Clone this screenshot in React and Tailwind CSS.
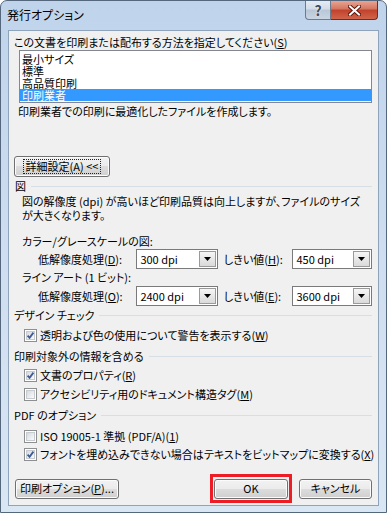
import React from "react";

const jp = "font-['Noto_Sans_CJK_JP','Noto_Sans',sans-serif] [font-feature-settings:'palt']";

function Btn({ children, className = "" }) {
    return (
        <div
            className={`flex items-center justify-center rounded-[3px] border border-[#707070] bg-[linear-gradient(#f2f2f2,#ebebeb_50%,#dddddd_50%,#cfcfcf)] shadow-[inset_0_0_0_1px_#fbfbfb] ${className}`}
        >
            {children}
        </div>
    );
}

function Section({ title, className = "" }) {
    return (
        <div className={`flex h-[13px] items-center leading-[13px] ${className}`}>
            <span>{title}</span>
            <div className="ml-[5px] h-px flex-1 bg-[#d5dfe5]" />
        </div>
    );
}

function Check({ checked }) {
    return (
        <div className="relative h-[13px] w-[13px] shrink-0 border border-[#8e8f8f] bg-white p-px">
            <div className="h-full w-full border border-[#c6cbd1] bg-gradient-to-br from-[#d6d9de] to-[#fbfbfb]" />
            {checked && (
                <svg className="absolute left-0 top-0" width="11" height="11" viewBox="0 0 11 11">
                    <path d="M2.6 5.6 L4.6 7.8 L8.4 2.6" fill="none" stroke="#3f5a94" strokeWidth="1.8" />
                </svg>
            )}
        </div>
    );
}

function CheckRow({ checked, children, className = "" }) {
    return (
        <div className={`ml-[10px] flex h-[14px] items-center leading-[14px] ${className}`}>
            <Check checked={checked} />
            <span className="ml-[3px]">{children}</span>
        </div>
    );
}

function Combo({ value, className = "" }) {
    return (
        <div className={`flex h-[20px] border border-[#7a7a7a] bg-white ${className}`}>
            <div className="flex-1 pl-[3px] leading-[18px]">{value}</div>
            <div className="m-px flex w-[17px] items-center justify-center border border-[#9a9a9a] bg-gradient-to-b from-[#f6f6f6] to-[#dadada]">
                <svg width="7" height="4" viewBox="0 0 7 4">
                    <path d="M0 0 H7 L3.5 4 Z" fill="#000" />
                </svg>
            </div>
        </div>
    );
}

function ComboRow({ label, left, right, rightLabel }) {
    return (
        <div className="ml-[24px] flex h-[20px] items-center">
            <span className="w-[99px]">{label}</span>
            <Combo value={left} className="w-[82px]" />
            <span className="ml-[6px] w-[69px]">{rightLabel}</span>
            <Combo value={right} className="w-[80px]" />
        </div>
    );
}

export default function App() {
    const items = ["最小サイズ", "標準", "高品質印刷", "印刷業者"];

    return (
        <div
            className={`flex h-[513px] w-[387px] flex-col overflow-hidden whitespace-nowrap rounded-t-[7px] border border-[#55677d] bg-gradient-to-b from-[#bfd4eb] via-[#cfdef0] to-[#d9e6f3] text-[11px] text-black ${jp}`}
        >
            {/* title bar */}
            <div className="flex h-[29px] shrink-0">
                <div className="pl-[6px] pt-[6px] text-[12px] leading-[16px]">発行オプション</div>
                <div className="ml-auto mr-[8px] flex h-[19px]">
                    <div className="flex w-[26px] items-center justify-center rounded-bl-[4px] border border-t-0 border-[#6d7b8c] bg-[linear-gradient(#e4ebf3,#d2dce8_45%,#b8c6d6_50%,#c9d5e2)] text-[14px] font-bold leading-none text-[#3c4b5c] [text-shadow:0_0_2px_#fff]">
                        ?
                    </div>
                    <div className="flex w-[47px] items-center justify-center rounded-br-[4px] border border-l-0 border-t-0 border-[#6e2c22] bg-[linear-gradient(#e8a491,#d4755f_45%,#c2412c_50%,#d0654b)]">
                        <svg width="13" height="11" viewBox="0 0 13 11">
                            <path d="M2 1.5 L11 9.5 M11 1.5 L2 9.5" stroke="#5a1a10" strokeWidth="4" strokeLinecap="square" />
                            <path d="M2 1.5 L11 9.5 M11 1.5 L2 9.5" stroke="#fff" strokeWidth="2" strokeLinecap="square" />
                        </svg>
                    </div>
                </div>
            </div>

            {/* client area */}
            <div className="ml-[7px] flex h-[476px] w-[371px] flex-col border border-[#8fa3ba] bg-[#f0f0f0] pl-[5px] pr-[6px] pt-[5px]">
                <div className="h-[13px] leading-[13px]">
                    この文書を印刷または配布する方法を指定してください(<u>S</u>)
                </div>

                <div className="ml-[5px] mt-px h-[53px] border border-[#828790] bg-white pt-[2px]">
                    {items.map((it, i) => (
                        <div
                            key={i}
                            className={`h-[12px] overflow-hidden pl-[2px] leading-[12px] ${
                                i === 3 ? "bg-[#3399ff] text-white" : ""
                            }`}
                        >
                            {it}
                        </div>
                    ))}
                </div>

                <div className="ml-[4px] mt-[2px] h-[13px] leading-[13px]">
                    印刷業者での印刷に最適化したファイルを作成します。
                </div>

                <div className="mt-[38px] flex">
                    <Btn className="h-[21px] w-[96px] border-[#3c7fb1] shadow-[inset_0_0_0_1px_#48d4f3]">
                        <div className="border border-dotted border-[#222] px-[2px] leading-[13px]">
                            詳細設定(A) &lt;&lt;
                        </div>
                    </Btn>
                </div>

                <Section title="図" className="ml-px mt-[3px]" />

                <div className="ml-[8px] mt-px leading-[14px]">
                    図の解像度 (dpi) が高いほど印刷品質は向上しますが、ファイルのサイズ
                    <br />
                    が大きくなります。
                </div>

                <div className="ml-[8px] mt-[13px] h-[13px] leading-[13px]">カラー/グレースケールの図:</div>
                <div className="mt-px">
                    <ComboRow
                        label={<>低解像度処理(<u>D</u>):</>}
                        left="300 dpi"
                        rightLabel={<>しきい値(<u>H</u>):</>}
                        right="450 dpi"
                    />
                </div>

                <div className="ml-[8px] mt-[2px] h-[13px] leading-[13px]">ライン アート (1 ビット):</div>
                <div className="mt-[2px]">
                    <ComboRow
                        label={<>低解像度処理(<u>O</u>):</>}
                        left="2400 dpi"
                        rightLabel={<>しきい値(<u>E</u>):</>}
                        right="3600 dpi"
                    />
                </div>

                <Section title="デザイン チェック" className="mt-[3px]" />
                <CheckRow checked className="mt-[6px]">
                    透明および色の使用について警告を表示する(<u>W</u>)
                </CheckRow>

                <Section title="印刷対象外の情報を含める" className="mt-[8px]" />
                <CheckRow checked className="mt-[5px]">
                    文書のプロパティ(<u>R</u>)
                </CheckRow>
                <CheckRow className="mt-[5px]">
                    アクセシビリティ用のドキュメント構造タグ(<u>M</u>)
                </CheckRow>

                <Section title="PDF のオプション" className="mt-[8px]" />
                <CheckRow className="mt-[7px]">
                    ISO 19005-1 準拠 (PDF/A)(<u>1</u>)
                </CheckRow>
                <CheckRow checked className="mt-[4px]">
                    フォントを埋め込みできない場合はテキストをビットマップに変換する(<u>X</u>)
                </CheckRow>

                {/* bottom buttons */}
                <div className="mt-[13px] flex h-[29px] items-center">
                    <Btn className="ml-px h-[20px] w-[104px]">
                        印刷オプション(<u>P</u>)...
                    </Btn>
                    <div className="ml-auto flex h-[29px] w-[82px] items-center justify-center border-[3px] border-[#ee1c24]">
                        <Btn className="h-[20px] w-[74px]">OK</Btn>
                    </div>
                    <Btn className="ml-[7px] h-[20px] w-[73px]">キャンセル</Btn>
                </div>
            </div>
        </div>
    );
}
